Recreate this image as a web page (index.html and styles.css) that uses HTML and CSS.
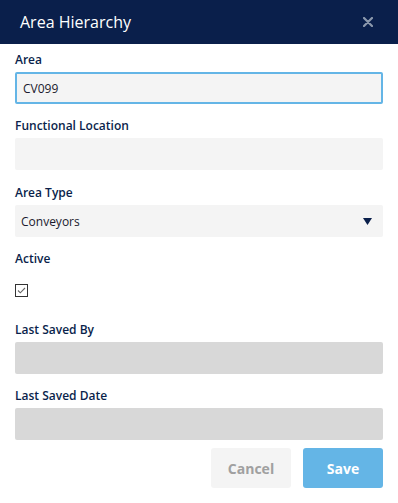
FILE: index.html
```html
<!DOCTYPE html>
<html lang="en">
<head>
  <meta charset="UTF-8" />
  <meta name="viewport" content="width=device-width, initial-scale=1.0" />
  <title>Area Hierarchy</title>
  <link rel="stylesheet" href="styles.css">
</head>
<body>
  <div class="dialog">
    <header>
      <h1>Area Hierarchy</h1>
      <svg class="close" width="10" height="10" viewBox="0 0 10 10">
        <path d="M1 1 L9 9 M9 1 L1 9" stroke="#8c99ad" stroke-width="2.2" stroke-linecap="round"/>
      </svg>
    </header>

    <form class="body">
      <div class="field">
        <label>Area</label>
        <div class="input focus">CV099</div>
      </div>
      <div class="field wide">
        <label>Functional Location</label>
        <div class="input"></div>
      </div>
      <div class="field">
        <label>Area Type</label>
        <div class="input select">
          <span>Conveyors</span>
          <svg width="9" height="7" viewBox="0 0 9 7"><path d="M0 0 H9 L4.5 7 Z" fill="#0a1f4b"/></svg>
        </div>
      </div>
      <div class="field">
        <label>Active</label>
        <div class="check">
          <svg width="13" height="13" viewBox="0 0 13 13">
            <rect x="0.5" y="0.5" width="12" height="12" fill="#fff" stroke="#333" stroke-width="1"/>
            <path d="M3 6.5 L5.3 8.8 L10 4" fill="none" stroke="#666" stroke-width="1.1"/>
          </svg>
        </div>
      </div>
      <div class="field">
        <label>Last Saved By</label>
        <div class="input disabled"></div>
      </div>
      <div class="field">
        <label>Last Saved Date</label>
        <div class="input disabled"></div>
      </div>
      <div class="actions">
        <button type="button" class="cancel">Cancel</button>
        <button type="button" class="save">Save</button>
      </div>
    </form>
  </div>
</body>
</html>
```

FILE: styles.css
```css
body {
  margin: 0;
  font-family: "Open Sans", sans-serif;
  background: #fff;
}
header {
  background-color: #0a1f4b;
  height: 44px;
  display: flex;
  justify-content: space-between;
  align-items: center;
  padding: 0 25px 0 20px;
}
header h1 {
  margin: 0;
  color: #fff;
  font-size: 16px;
  font-weight: 400;
}
.close {
  display: block;
}
.body {
  padding: 8px 15px 0;
}
.field {
  margin-bottom: 14px;
}
.field.wide {
  margin-bottom: 15px;
}
.field label {
  display: block;
  font-size: 12px;
  font-weight: 600;
  color: #0a1f4b;
  line-height: 16px;
  margin-bottom: 4px;
}
.input {
  height: 32px;
  box-sizing: border-box;
  background: #f4f4f4;
  border-radius: 2px;
  padding: 0 6px;
  font-size: 12px;
  color: #1a1a2e;
  display: flex;
  align-items: center;
}
.input.focus {
  border: 2px solid #64b5e6;
}
.input.select {
  justify-content: space-between;
  padding-right: 11px;
}
.input.disabled {
  background: #d8d8d8;
}
.check {
  height: 37px;
  box-sizing: border-box;
  padding-top: 13px;
}
.check svg {
  display: block;
}
.actions {
  display: flex;
  justify-content: flex-end;
  gap: 12px;
  margin-top: -6px;
}
.actions button {
  width: 80px;
  height: 40px;
  border: none;
  border-radius: 3px;
  font-family: "Open Sans", sans-serif;
  font-size: 14px;
  font-weight: 700;
}
.cancel {
  background: #f4f4f4;
  color: #a0a0a0;
}
.save {
  background: #64b5e6;
  color: #fff;
}
```
